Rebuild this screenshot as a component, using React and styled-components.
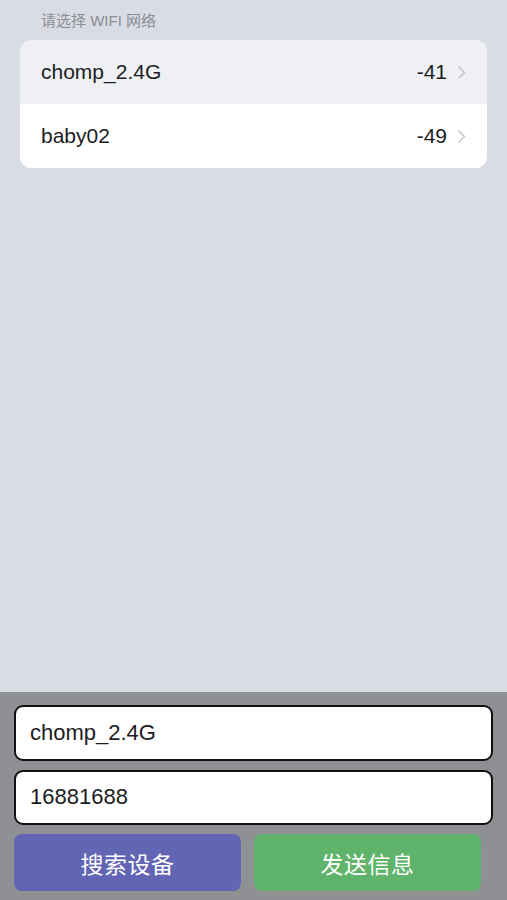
import React from 'react';
import styled, { createGlobalStyle } from 'styled-components';

const GlobalStyle = createGlobalStyle`
  html, body {
    margin: 0;
    padding: 0;
    background: #d9dce4;
  }
  * { box-sizing: border-box; }
`;

const Screen = styled.div`
  width: 507px;
  height: 900px;
  display: flex;
  flex-direction: column;
  background: #d9dce4;
  font-family: "Liberation Sans", "Noto Sans CJK SC", sans-serif;
`;

const ListArea = styled.div`
  flex: 1;
  padding: 12px 20px 0 20px;
`;

const SectionTitle = styled.div`
  font-size: 15px;
  color: #8b8d93;
  padding-left: 21px;
  height: 28px;
  line-height: 18px;
`;

const Card = styled.div`
  background: #fff;
  border-radius: 12px;
  overflow: hidden;
`;

const Row = styled.div`
  height: 64px;
  display: flex;
  align-items: center;
  padding: 0 21px 0 21px;
  background: ${(props) => props.active ? '#eef0f3' : '#ffffff'};
`;

const Name = styled.span`
  flex: 1;
  font-size: 21px;
  color: #1c1c1e;
`;

const Signal = styled.span`
  font-size: 21px;
  color: #1c1c1e;
  margin-right: 11px;
`;

const Chevron = () => (
  <svg width="8" height="13" viewBox="0 0 8 13">
    <path d="M1 1 L6.5 6.5 L1 12" fill="none" stroke="#c4c5c9" strokeWidth="1.5" strokeLinecap="round" strokeLinejoin="round" />
  </svg>
);

const Panel = styled.div`
  height: 208px;
  background: #8e9094;
  padding: 13px 14px 9px 14px;
  display: flex;
  flex-direction: column;
  gap: 9px;
`;

const Field = styled.div`
  height: 56px;
  background: #fff;
  border: 2.5px solid #111;
  border-radius: 9px;
  display: flex;
  align-items: center;
  padding-left: 14px;
  font-size: 22px;
  color: #1c1c1e;
`;

const ButtonRow = styled.div`
  display: flex;
  gap: 13px;
  padding-right: 12px;
`;

const ActionButton = styled.div`
  flex: 1;
  height: 57px;
  border-radius: 8px;
  background: ${(props) => props.color};
  color: #fff;
  font-size: 23px;
  display: flex;
  align-items: center;
  justify-content: center;
  letter-spacing: 0.5px;
`;

const networks = [
  { name: 'chomp_2.4G', rssi: '-41', active: true },
  { name: 'baby02', rssi: '-49' },
];

const App = () => {
  return (
    <Screen>
      <GlobalStyle />
      <ListArea>
        <SectionTitle>请选择 WIFI 网络</SectionTitle>
        <Card>
          {networks.map((n) => (
            <Row key={n.name} active={n.active}>
              <Name>{n.name}</Name>
              <Signal>{n.rssi}</Signal>
              <Chevron />
            </Row>
          ))}
        </Card>
      </ListArea>
      <Panel>
        <Field>chomp_2.4G</Field>
        <Field>16881688</Field>
        <ButtonRow>
          <ActionButton color="#6264b4">搜索设备</ActionButton>
          <ActionButton color="#60b36b">发送信息</ActionButton>
        </ButtonRow>
      </Panel>
    </Screen>
  );
};

export default App;
